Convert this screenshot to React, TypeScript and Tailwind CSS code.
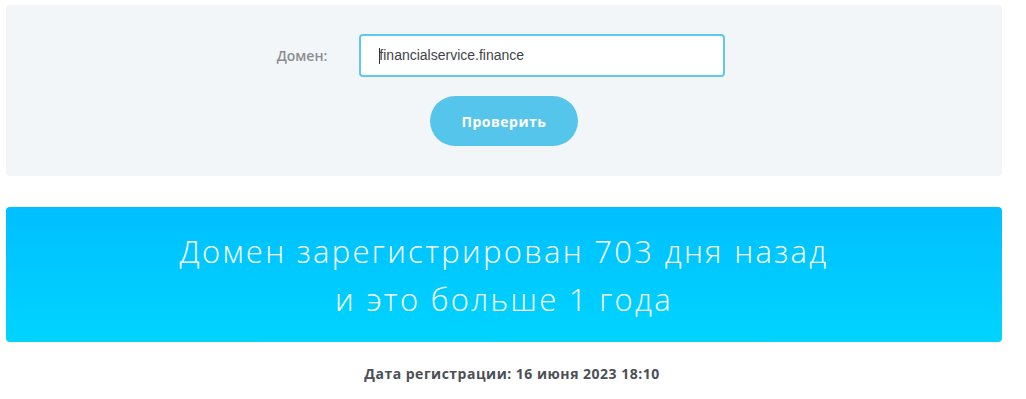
export default function App() {
  return (
    <div className="w-[1026px] h-[399px] bg-white font-['Open_Sans',sans-serif] pl-[6px] pt-[5px]">
      <div className="w-[996px]">
        {/* Form */}
        <div className="bg-[#f3f6f8] rounded-[4px] h-[171px] flex flex-col items-center pt-[29px]">
          <div className="flex items-center gap-[32px] mr-[6px]">
            <label className="text-[14px] font-semibold text-[#8a8e92]">Домен:</label>
            <div className="w-[366px] h-[43px] bg-white border-2 border-[#5ec8ef] rounded-[4px] flex items-center pl-[18px] text-[14px] text-[#3f4448] font-['Liberation_Sans',sans-serif]">
              <span className="w-px h-[16px] bg-[#333] mr-[-1px]" />
              financialservice.finance
            </div>
          </div>
          <button className="mt-[19px] w-[148px] h-[50px] rounded-full bg-[#56c5ec] text-white text-[14px] tracking-[0.5px] font-bold">
            Проверить
          </button>
        </div>

        {/* Result */}
        <div className="mt-[31px] h-[135px] rounded-[4px] bg-gradient-to-b from-[#00bfff] to-[#00d4ff] flex flex-col items-center justify-center text-white text-[31px] tracking-[2.3px] leading-[48px] font-light">
          <div>Домен зарегистрирован 703 дня назад</div>
          <div>и это больше 1 года</div>
        </div>

        <div className="mt-[21px] pl-[16px] text-center text-[14px] tracking-[0.5px] font-bold text-[#4b5056]">
          Дата регистрации: 16 июня 2023 18:10
        </div>
      </div>
    </div>
  );
}
